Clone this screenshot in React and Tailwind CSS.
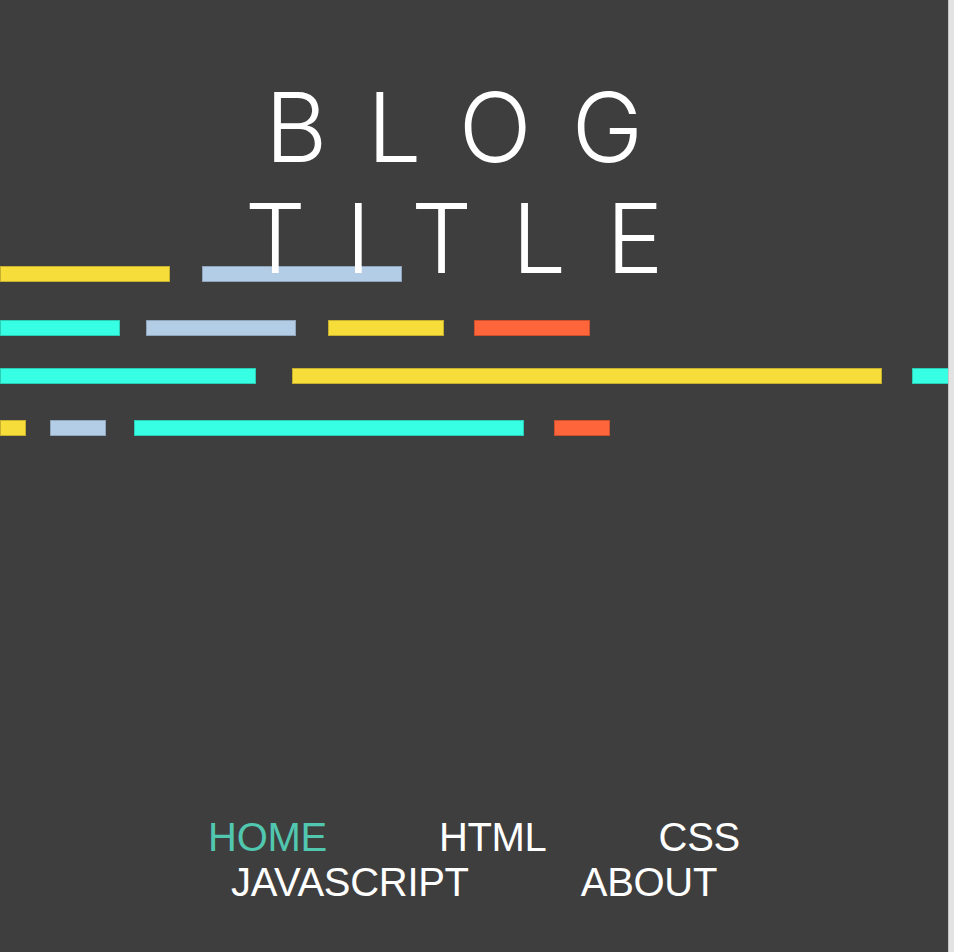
const rows = [
  {
    mt: "mt-0",
    bars: [
      { w: "w-[170px]", c: "bg-[#f6dd3a]", ml: "ml-0" },
      { w: "w-[200px]", c: "bg-[#b3cde6]", ml: "ml-[32px]" },
    ],
  },
  {
    mt: "mt-[38px]",
    bars: [
      { w: "w-[120px]", c: "bg-[#36ffe3]", ml: "ml-0" },
      { w: "w-[150px]", c: "bg-[#b3cde6]", ml: "ml-[26px]" },
      { w: "w-[116px]", c: "bg-[#f6dd3a]", ml: "ml-[32px]" },
      { w: "w-[116px]", c: "bg-[#ff653a]", ml: "ml-[30px]" },
    ],
  },
  {
    mt: "mt-[32px]",
    bars: [
      { w: "w-[256px]", c: "bg-[#36ffe3]", ml: "ml-0" },
      { w: "w-[590px]", c: "bg-[#f6dd3a]", ml: "ml-[36px]" },
      { w: "w-[120px]", c: "bg-[#36ffe3]", ml: "ml-[30px]" },
    ],
  },
  {
    mt: "mt-[36px]",
    bars: [
      { w: "w-[26px]", c: "bg-[#f6dd3a]", ml: "ml-0" },
      { w: "w-[56px]", c: "bg-[#b3cde6]", ml: "ml-[24px]" },
      { w: "w-[390px]", c: "bg-[#36ffe3]", ml: "ml-[28px]" },
      { w: "w-[56px]", c: "bg-[#ff653a]", ml: "ml-[30px]" },
    ],
  },
];

const links = ["HOME", "HTML", "CSS", "JAVASCRIPT", "ABOUT"];

export default function App() {
  return (
    <div className="flex h-[952px] w-full overflow-hidden">
      <main className="flex min-w-0 flex-1 flex-col bg-[#3e3e3e]">
        {/* Title */}
        <h1
          className="relative z-10 mx-auto mt-[72px] max-w-[600px] text-center text-[96px] font-light uppercase leading-[111px] tracking-[40px] text-white"
          style={{ fontFamily: "Inter, 'Liberation Sans', sans-serif" }}
        >
          Blog Title
        </h1>

        {/* Decorative bars */}
        <div className="-mt-[28px] flex flex-col overflow-hidden">
          {rows.map((row, i) => (
            <div key={i} className={`flex ${row.mt}`}>
              {row.bars.map((b, j) => (
                <div
                  key={j}
                  className={`h-[16px] shrink-0 border border-black/20 ${b.w} ${b.c} ${b.ml}`}
                />
              ))}
            </div>
          ))}
        </div>

        {/* Nav */}
        <nav
          className="mt-[379px] text-center text-[40px] leading-[45px] tracking-[-0.3px] text-white"
          style={{ fontFamily: "'Liberation Sans', Arial, sans-serif" }}
        >
          {links.map((l) => (
            <a
              key={l}
              href="#"
              className={`mx-[56px] inline-block ${l === "HOME" ? "text-[#52c7b0]" : "text-white"}`}
            >
              {l}
            </a>
          ))}
        </nav>
      </main>
      <div className="w-[6px] shrink-0 border-l border-[#c4c4c4] bg-[#e2e2e2]" />
    </div>
  );
}
